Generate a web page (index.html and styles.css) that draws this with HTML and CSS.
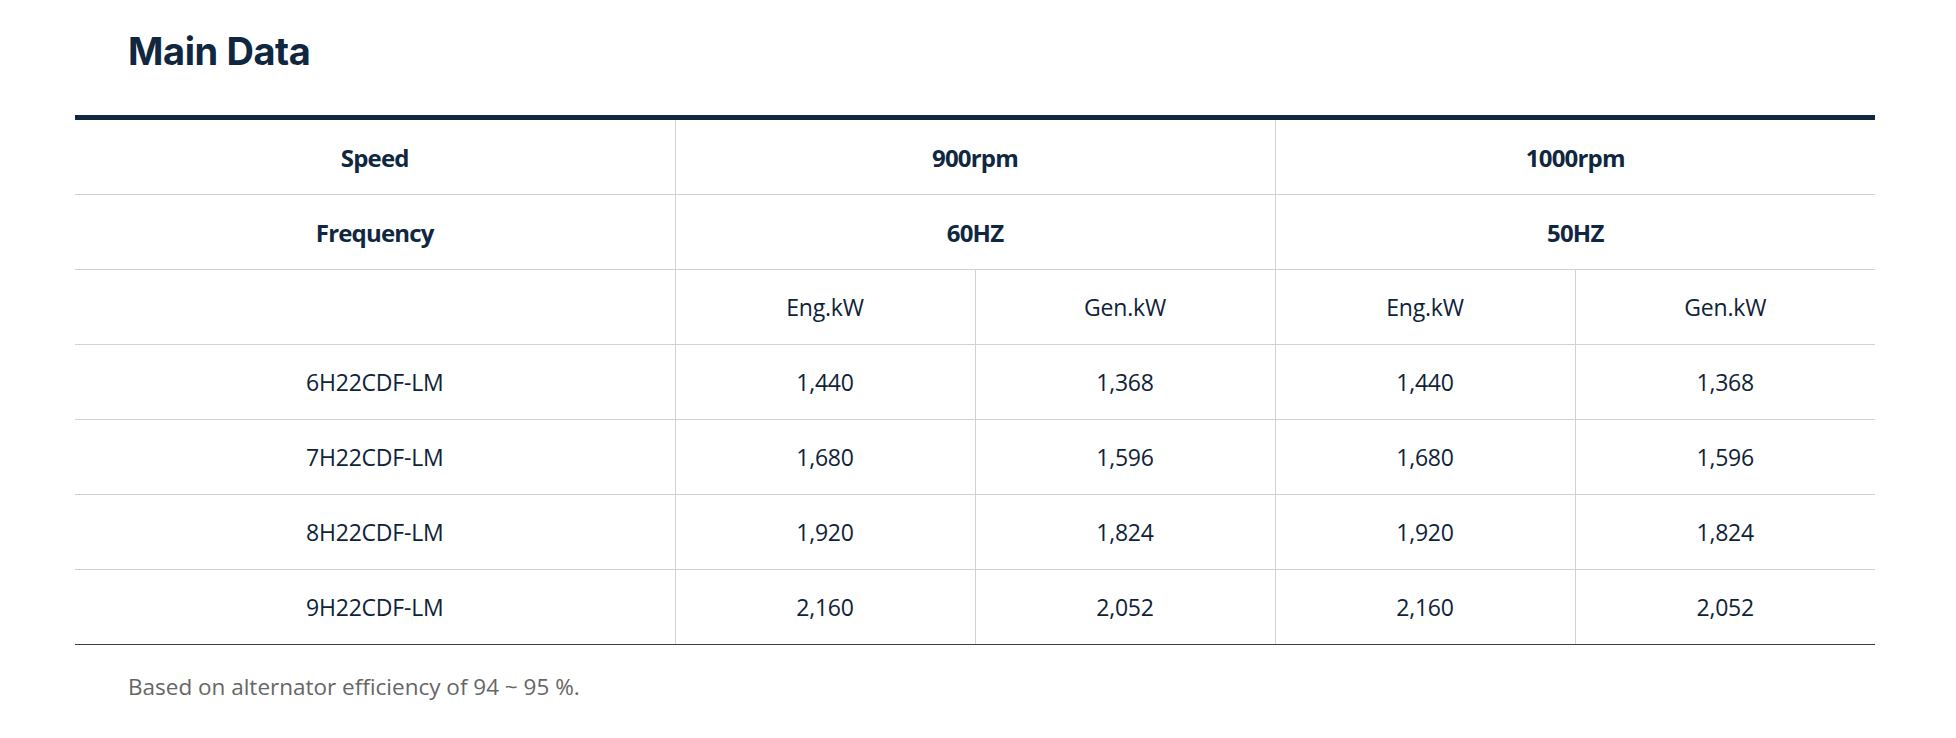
FILE: index.html
```html
<!DOCTYPE html>
<html lang="en">
<head>
<meta charset="utf-8">
<title>Main Data</title>
<link rel="stylesheet" href="styles.css">
</head>
<body>
<section class="spec">
  <h2 class="spec-title">Main Data</h2>
  <table class="spec-table">
    <colgroup>
      <col class="col-model">
      <col class="col-val"><col class="col-val"><col class="col-val"><col class="col-val">
    </colgroup>
    <thead>
      <tr class="head-row">
        <th>Speed</th>
        <th colspan="2">900rpm</th>
        <th colspan="2">1000rpm</th>
      </tr>
      <tr class="head-row">
        <th>Frequency</th>
        <th colspan="2">60HZ</th>
        <th colspan="2">50HZ</th>
      </tr>
      <tr>
        <td></td>
        <td>Eng.kW</td>
        <td>Gen.kW</td>
        <td>Eng.kW</td>
        <td>Gen.kW</td>
      </tr>
    </thead>
    <tbody>
      <tr><td>6H22CDF-LM</td><td>1,440</td><td>1,368</td><td>1,440</td><td>1,368</td></tr>
      <tr><td>7H22CDF-LM</td><td>1,680</td><td>1,596</td><td>1,680</td><td>1,596</td></tr>
      <tr><td>8H22CDF-LM</td><td>1,920</td><td>1,824</td><td>1,920</td><td>1,824</td></tr>
      <tr><td>9H22CDF-LM</td><td>2,160</td><td>2,052</td><td>2,160</td><td>2,052</td></tr>
    </tbody>
  </table>
  <p class="spec-note">Based on alternator efficiency of 94 ~ 95 %.</p>
</section>
</body>
</html>
```

FILE: styles.css
```css
html, body {
  margin: 0;
  padding: 0;
  background: #ffffff;
}

body {
  font-family: "Open Sans", "Noto Sans", sans-serif;
  color: #0f2338;
}

.spec {
  width: 1800px;
  margin-left: 75px;
  padding-top: 28px;
}

.spec-title {
  margin: 0 0 0 53px;
  font-family: Inter, "Noto Sans", sans-serif;
  font-weight: 700;
  font-size: 38px;
  line-height: 46px;
  letter-spacing: -0.4px;
  color: #0f2740;
}

.spec-table {
  margin-top: 41px;
  width: 1800px;
  border-collapse: collapse;
  table-layout: fixed;
  border-top: 5px solid #0f2740;
  border-bottom: 1px solid #3a3f45;
}

.col-model { width: 600px; }
.col-val { width: 300px; }

.spec-table th,
.spec-table td {
  height: 74px;
  padding: 0;
  text-align: center;
  vertical-align: middle;
  border-bottom: 1px solid #d2d2d2;
  border-left: 1px solid #d2d2d2;
  color: #0f2338;
}

.spec-table tbody tr:last-child td {
  border-bottom: 1px solid #3a3f45;
}

.spec-table th:first-child,
.spec-table td:first-child {
  border-left: none;
}

.spec-table th {
  font-weight: 700;
  font-size: 24px;
  letter-spacing: -0.8px;
  color: #0f2740;
}

.spec-table td {
  font-weight: 400;
  font-size: 23px;
  letter-spacing: -0.2px;
}

.spec-note {
  margin: 27px 0 0 53px;
  font-size: 22.5px;
  line-height: 30px;
  color: #666666;
}
```
